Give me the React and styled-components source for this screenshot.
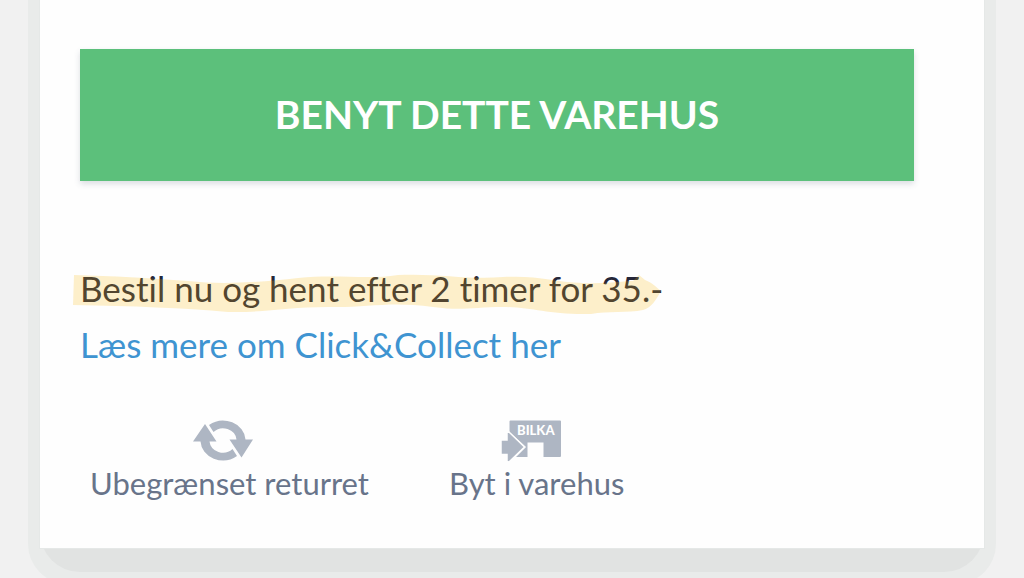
import React from "react";
import styled, { createGlobalStyle } from "styled-components";

const GlobalStyle = createGlobalStyle`
  *, *::before, *::after { box-sizing: border-box; }
  body {
    margin: 0;
    background: #f1f1f1;
    font-family: Lato, "Noto Sans", sans-serif;
    font-variant-ligatures: none;
  }
`;

const Page = styled.main`
  padding: 0 40px 30px;
  overflow: hidden;
`;

const Card = styled.section`
  position: relative;
  isolation: isolate;

  &::before,
  &::after {
    content: "";
    position: absolute;
    z-index: -1;
  }
  &::before {
    inset: 0 -12px -36px;
    border-radius: 0 0 40px 40px;
    background: #e9ebea;
  }
  &::after {
    inset: 0 0 -24px;
    border-radius: 0 0 40px 40px;
    background: #e1e3e2;
  }
`;

const CardBody = styled.div`
  padding: 49px 70px 44px 40px;
  background: #fefefe;
  box-shadow: 0 0 0 1px #e5e8e7;
`;

const StoreButton = styled.button`
  display: block;
  width: 100%;
  height: 132px;
  padding: 0 0 2px;
  border: 0;
  background: #5cc07b;
  box-shadow: 0 3px 6px rgba(60, 80, 100, 0.18);
  color: #fff;
  font: inherit;
  font-size: 39px;
  font-weight: 700;
  cursor: pointer;
`;

const Info = styled.div`
  padding-top: 79px;
  font-size: 35px;
  line-height: 56px;
`;

const Offer = styled.p`
  position: relative;
  width: fit-content;
  margin: 0;
  color: #242639;
  white-space: nowrap;
`;

const Marker = styled.svg`
  position: absolute;
  top: 13px;
  left: -7px;
  width: 588px;
  height: 42px;
  pointer-events: none;
`;

const MoreLink = styled.a`
  color: #3f94d1;
  text-decoration: none;
`;

const Perks = styled.ul`
  display: flex;
  gap: 80px;
  margin: 0;
  padding: 48px 10px 0;
  list-style: none;
`;

const Perk = styled.li`
  display: flex;
  flex-direction: column;
  align-items: center;
  color: #68748a;
  font-size: 31px;
  line-height: 42px;
  white-space: nowrap;
`;

const PerkIcon = styled.svg`
  width: 60px;
  height: 42px;
  margin-right: 12px;
  fill: #aeb6c3;
`;

function ReturnIcon() {
  return (
    <PerkIcon viewBox="0 0 60 42" aria-hidden="true">
      <path d="M16 5A22.5 20 0 0 1 52.5 19.5H60L48.5 37.5L36.5 19.5H43.5A13.5 12.5 0 0 0 20.5 12Z" />
      <path d="M44 36A22.5 20 0 0 1 7.5 21.5H0L12 4L23.5 21.5H16.5A13.5 12.5 0 0 0 39.5 29Z" />
    </PerkIcon>
  );
}

function StoreIcon() {
  return (
    <PerkIcon viewBox="0 0 60 42" aria-hidden="true">
      <path d="M9.5 0.5H59Q60 0.5 60 1.5V36Q60 37 59 37H42.5V22.5H26.5V37H15L25 27L8.5 12V1.5Q8.5 0.5 9.5 0.5Z" />
      <path
        d="M0 20H6V12.5L8 12L23.5 27L8 42L6 41.5V34.5H0Z"
        stroke="#fefefe"
        strokeWidth="1.5"
      />
      <text
        x="16"
        y="15"
        fill="#fff"
        fontFamily="Lato, sans-serif"
        fontSize="13"
        fontWeight="900"
      >
        BILKA
      </text>
    </PerkIcon>
  );
}

export default function App() {
  return (
    <>
      <GlobalStyle />
      <Page>
        <Card>
          <CardBody>
            <StoreButton type="button">BENYT DETTE VAREHUS</StoreButton>
            <Info>
              <Offer>
                Bestil nu og hent efter 2 timer for 35.-
                <Marker viewBox="0 0 588 42" preserveAspectRatio="none" aria-hidden="true">
                  <path
                    d="M1 2C40 3 75 5 115 8C150 12 190 9 225 5C265 1 295 7 325 2C365 0 395 7 430 4C465 2 480 9 510 10C535 11 550 8 560 8L566 2L572 7C580 10 584 15 588 18C583 27 578 35 570 37C555 40 535 38 518 41C475 42 460 34 430 34C400 34 390 38 360 34C315 28 295 35 255 34C215 34 190 40 155 39C110 35 60 33 0 32Z"
                    fill="rgb(250, 186, 13)"
                    fillOpacity="0.215"
                  />
                </Marker>
              </Offer>
              <MoreLink href="#click-collect">Læs mere om Click&amp;Collect her</MoreLink>
            </Info>
            <Perks>
              <Perk>
                <ReturnIcon />
                Ubegrænset returret
              </Perk>
              <Perk>
                <StoreIcon />
                Byt i varehus
              </Perk>
            </Perks>
          </CardBody>
        </Card>
      </Page>
    </>
  );
}
